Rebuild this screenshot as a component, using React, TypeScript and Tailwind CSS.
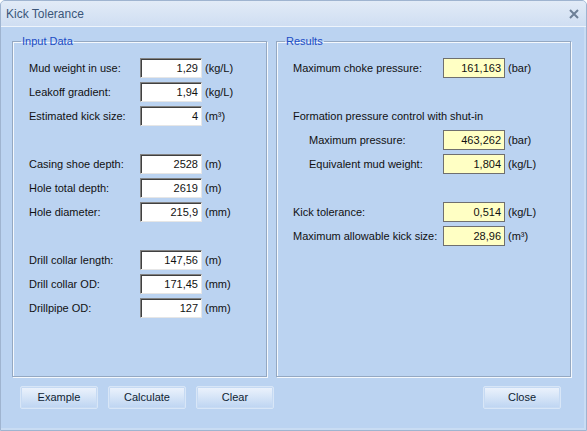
import React from 'react';

type Row = { label: string; value?: string; unit?: string; indent?: boolean; gapBefore?: boolean };

const inputRows: Row[] = [
  { label: 'Mud weight in use:', value: '1,29', unit: '(kg/L)' },
  { label: 'Leakoff gradient:', value: '1,94', unit: '(kg/L)' },
  { label: 'Estimated kick size:', value: '4', unit: '(m³)' },
  { label: 'Casing shoe depth:', value: '2528', unit: '(m)', gapBefore: true },
  { label: 'Hole total depth:', value: '2619', unit: '(m)' },
  { label: 'Hole diameter:', value: '215,9', unit: '(mm)' },
  { label: 'Drill collar length:', value: '147,56', unit: '(m)', gapBefore: true },
  { label: 'Drill collar OD:', value: '171,45', unit: '(mm)' },
  { label: 'Drillpipe OD:', value: '127', unit: '(mm)' },
];

const resultRows: Row[] = [
  { label: 'Maximum choke pressure:', value: '161,163', unit: '(bar)' },
  { label: 'Formation pressure control with shut-in', gapBefore: true },
  { label: 'Maximum pressure:', value: '463,262', unit: '(bar)', indent: true },
  { label: 'Equivalent mud weight:', value: '1,804', unit: '(kg/L)', indent: true },
  { label: 'Kick tolerance:', value: '0,514', unit: '(kg/L)', gapBefore: true },
  { label: 'Maximum allowable kick size:', value: '28,96', unit: '(m³)' },
];

function Field({ row, labelW, result }: { row: Row; labelW: string; result?: boolean }) {
  return (
    <div className={`flex items-center h-6 ${row.gapBefore ? 'mt-6' : ''}`}>
      {row.value === undefined ? (
        <span>{row.label}</span>
      ) : (
        <>
          <span className={`${labelW} shrink-0 ${row.indent ? 'pl-4' : ''}`}>{row.label}</span>
          <div
            className={`w-[62px] h-[20px] flex items-center justify-end pr-[3px] ${
              result
                ? 'bg-[#ffffc4] border border-[#6f6f6f]'
                : 'bg-white border border-t-[#828282] border-l-[#828282] border-r-[#e6e6e6] border-b-[#e6e6e6] shadow-[inset_1px_1px_0_#404040]'
            }`}
          >
            {row.value}
          </div>
          <span className="ml-[3px]">{row.unit}</span>
        </>
      )}
    </div>
  );
}

function Group({ title, className, children }: { title: string; className: string; children: React.ReactNode }) {
  return (
    <fieldset className={`border border-[#94a8c2] shadow-[inset_1px_1px_0_#f4f8fd,1px_1px_0_#f4f8fd] ${className}`}>
      <legend className="ml-[-8px] px-[1px] text-[#1b4cc4] leading-[14px]">{title}</legend>
      {children}
    </fieldset>
  );
}

function Btn({ label }: { label: string }) {
  return (
    <button className="w-[78px] h-[23px] border border-[#d8e6f7] rounded-[2px] bg-gradient-to-b from-[#edf3fc] via-[#d5e4f7] to-[#bdd4f2] text-[#0f1e33] shadow-[inset_0_0_0_1px_#c6daf3]">
      {label}
    </button>
  );
}

export default function App() {
  return (
    <div
      className="w-[587px] h-[431px] flex flex-col bg-[#bbd3f1] border border-[#9fb4d0] rounded-t-[5px] overflow-hidden text-[11px] text-[#111]"
      style={{ fontFamily: "'Liberation Sans', Arial, sans-serif" }}
    >
      {/* title bar */}
      <div className="h-[26px] shrink-0 flex items-center justify-between pl-[5px] pr-[7px] bg-gradient-to-b from-[#e2ebf7] to-[#cfdef2] border-b border-[#eef4fb]">
        <span className="text-[12px] text-[#3b5679]">Kick Tolerance</span>
        <svg width="10" height="10" viewBox="0 0 10 10">
          <path d="M1 1 L9 9 M9 1 L1 9" stroke="#6d7f96" strokeWidth="2" />
        </svg>
      </div>

      <div className="flex-1 flex flex-col px-[11px] pt-[7px] border-r-[2px] border-b-[2px] border-[#c9dcf3]">
        <div className="flex gap-[9px]">
          <Group title="Input Data" className="w-[255px] h-[343px] pl-[16px] pt-[8px]">
            {inputRows.map((r) => (
              <Field key={r.label} row={r} labelW="w-[111px]" />
            ))}
          </Group>
          <Group title="Results" className="w-[295px] h-[343px] pl-[16px] pt-[8px]">
            {resultRows.map((r) => (
              <Field key={r.label} row={r} labelW="w-[150px]" result />
            ))}
          </Group>
        </div>

        <div className="flex mt-[9px] pl-[8px] pr-[12px]">
          <div className="flex gap-[10px]">
            <Btn label="Example" />
            <Btn label="Calculate" />
            <Btn label="Clear" />
          </div>
          <div className="ml-auto">
            <Btn label="Close" />
          </div>
        </div>
      </div>
    </div>
  );
}
